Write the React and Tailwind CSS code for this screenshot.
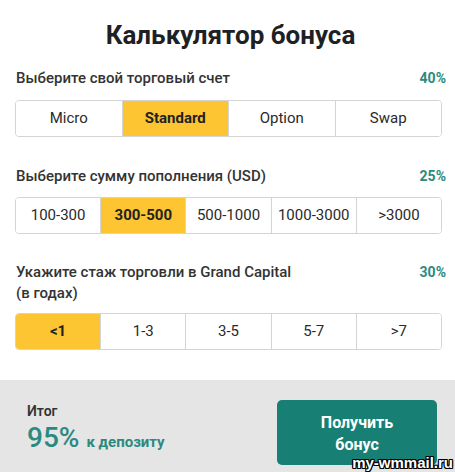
import React, { useState } from "react";

const ACCOUNTS = ["Micro", "Standard", "Option", "Swap"];
const AMOUNTS = ["100-300", "300-500", "500-1000", "1000-3000", ">3000"];
const YEARS = ["<1", "1-3", "3-5", "5-7", ">7"];

const Segmented = ({ items, value, onChange, className = "" }) => (
  <div
    className={`mr-[4px] flex h-[37px] overflow-hidden rounded-[4px] border border-[#d4d4d4] ${className}`}
  >
    {items.map((item, i) => (
      <button
        key={item}
        onClick={() => onChange(i)}
        className={`flex-1 text-[15px] ${
          i > 0 ? "border-l border-[#d4d4d4]" : ""
        } ${
          value === i
            ? "bg-[#fdc532] font-bold text-[#222]"
            : "bg-white text-[#2a2a2a]"
        }`}
      >
        {item}
      </button>
    ))}
  </div>
);

const Label = ({ children, percent, className = "" }) => (
  <div className={`flex items-start justify-between ${className}`}>
    <div className="pl-px text-[15px] font-medium leading-[21px] text-[#333]">
      {children}
    </div>
    <div className="text-[14px] font-bold leading-[21px] text-[#2b8a80]">
      {percent}
    </div>
  </div>
);

export default function App() {
  const [account, setAccount] = useState(1);
  const [amount, setAmount] = useState(1);
  const [years, setYears] = useState(0);

  return (
    <div
      className="relative flex h-[472px] w-[455px] flex-col overflow-hidden bg-white"
      style={{ fontFamily: "Roboto, 'Noto Sans', sans-serif" }}
    >
      <div className="pl-[15px] pr-[9px]">
        <h1 className="pt-[20px] text-center text-[26px] font-bold leading-[30px] text-[#1e2124]">
          Калькулятор бонуса
        </h1>

        <Label percent="40%" className="mt-[18px]">
          Выберите свой торговый счет
        </Label>
        <Segmented
          items={ACCOUNTS}
          value={account}
          onChange={setAccount}
          className="mt-[11px]"
        />

        <Label percent="25%" className="mt-[29px]">
          Выберите сумму пополнения (USD)
        </Label>
        <Segmented
          items={AMOUNTS}
          value={amount}
          onChange={setAmount}
          className="mt-[10px]"
        />

        <Label percent="30%" className="mt-[28px]">
          Укажите стаж торговли в Grand Capital
          <br />
          (в годах)
        </Label>
        <Segmented
          items={YEARS}
          value={years}
          onChange={setYears}
          className="mt-[9px]"
        />
      </div>

      <div className="mt-auto flex h-[92px] items-start justify-between bg-[#e5e5e5] pl-[27px] pr-[18px] pt-[20px]">
        <div className="pt-[2px]">
          <div className="text-[14px] font-semibold leading-[18px] text-[#333]">
            Итог
          </div>
          <div className="mt-[2px] flex items-baseline gap-[7px] text-[#2b8a80]">
            <span className="text-[28px] font-medium leading-[32px]">95%</span>
            <span className="text-[15px] font-bold">к депозиту</span>
          </div>
        </div>
        <button className="h-[65px] w-[160px] rounded-[5px] bg-[#187f75] pt-[2px] text-[16px] font-bold leading-[22px] text-white">
          Получить
          <br />
          бонус
        </button>
      </div>

      <div className="absolute bottom-[2px] right-[2px] text-[15px] font-bold leading-none text-white [font-family:'Liberation_Sans',sans-serif] [text-shadow:1px_1px_0_#000,-1px_-1px_0_#000,1px_-1px_0_#000,-1px_1px_0_#000,0_1px_0_#000,0_-1px_0_#000,1px_0_0_#000,-1px_0_0_#000]">
        my-wmmail.ru
      </div>
    </div>
  );
}
